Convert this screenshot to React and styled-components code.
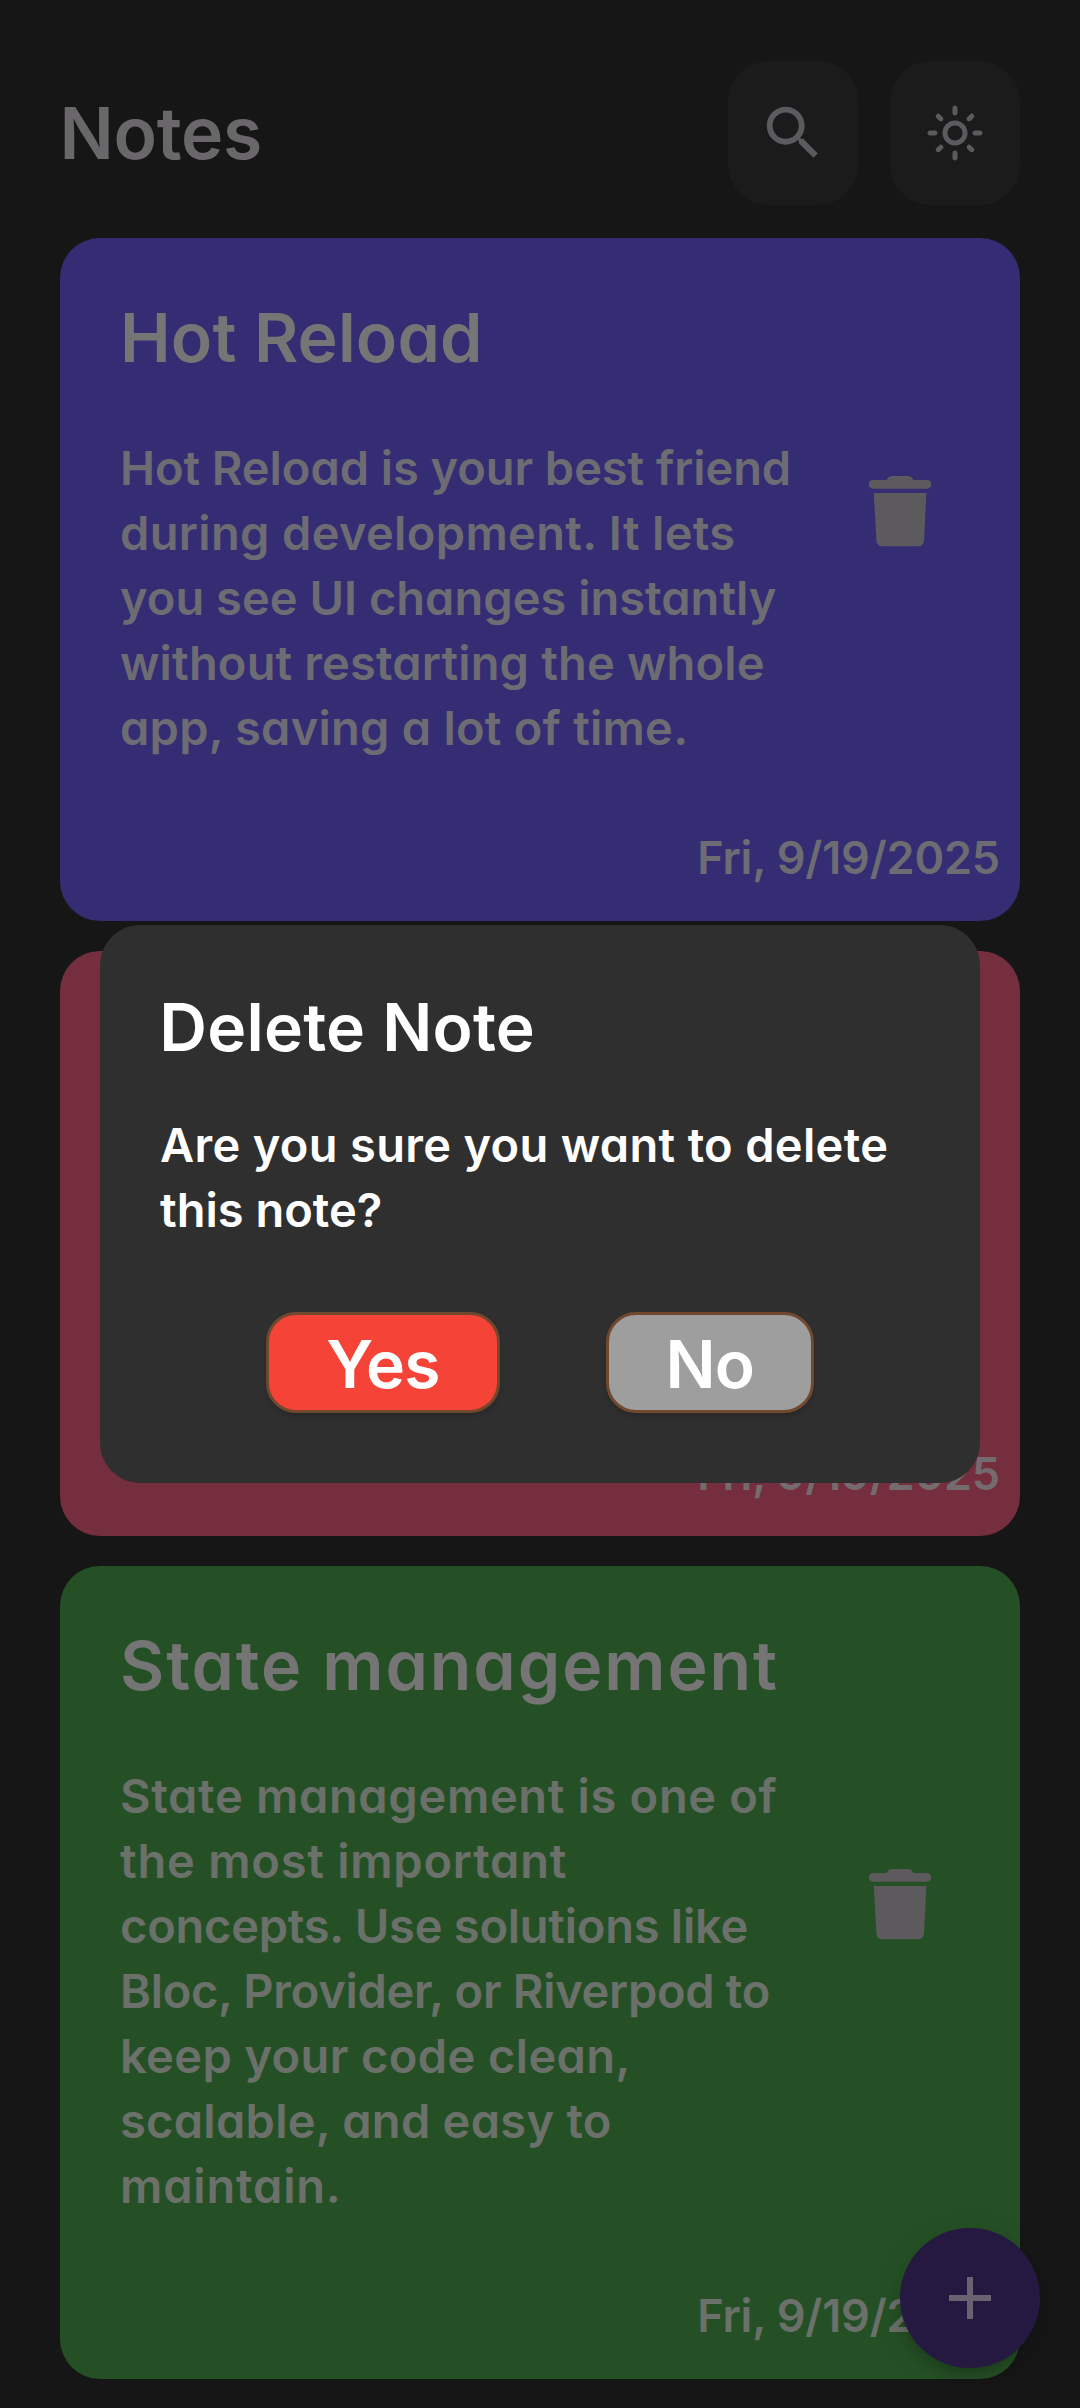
import React from "react";
import styled, { createGlobalStyle } from "styled-components";
import { MdSearch, MdOutlineLightMode, MdAdd } from "react-icons/md";

const GlobalStyle = createGlobalStyle`
  * { box-sizing: border-box; }
  body {
    margin: 0;
    background: #161616;
    font-family: Inter, "Noto Sans", sans-serif;
    font-weight: 600;
    font-feature-settings: "cv11";
  }
  button { font: inherit; font-feature-settings: inherit; border: 0; padding: 0; background: none; }
`;

const Screen = styled.div`
  position: relative;
  height: 2408px;
  padding: 61px 60px 0;
  overflow: hidden;
  background: #161616;
`;

const Header = styled.header`
  display: flex;
  align-items: center;
  height: 144px;
  margin-bottom: 33px;
`;

const ScreenTitle = styled.h1`
  flex: 1;
  margin: 0 0 0 -0.6px;
  font-size: 71.5px;
  font-weight: inherit;
  line-height: 108px;
  letter-spacing: -0.25px;
  color: #69676a;
`;

const HeaderActions = styled.div`
  display: flex;
  gap: 32px;
`;

const IconButton = styled.button`
  display: grid;
  place-items: center;
  width: 130px;
  height: 144px;
  border-radius: 40px;
  background: #1b1b1b;
  color: #5c5a5e;
`;

const NoteList = styled.main`
  display: flex;
  flex-direction: column;
  gap: 30px;
`;

const NoteCard = styled.article`
  display: flex;
  flex-direction: column;
  min-height: ${(p) => p.$minHeight || 0}px;
  padding: 24px 20px 30.5px 60px;
  border-radius: 40px;
  background: ${(p) => p.$color};
`;

const NoteMain = styled.div`
  display: flex;
  align-items: center;
  justify-content: space-between;
  padding-right: 69px;
`;

const NoteText = styled.div`
  padding-top: 26px;
`;

const NoteTitle = styled.h2`
  margin: 0 0 48px;
  font-size: 68px;
  font-weight: inherit;
  line-height: 99px;
  white-space: nowrap;
  color: #757575;
`;

const NoteBody = styled.p`
  width: 690px;
  margin: 0;
  font-size: 47px;
  line-height: 65px;
  color: ${(p) => p.$ink};
`;

const Line = styled.span`
  display: block;
  white-space: nowrap;
  letter-spacing: ${(p) => p.$track}px;
`;

const DeleteButton = styled.button`
  display: flex;
  width: 62px;
  height: 71px;
  margin-left: -62px;
  color: #5d5a5e;
`;

const NoteDate = styled.time`
  align-self: flex-end;
  margin-top: auto;
  padding-top: 65px;
  font-size: 45px;
  line-height: 65px;
  letter-spacing: -0.16px;
  color: ${(p) => p.$ink};
`;

const AddButton = styled.button`
  position: absolute;
  left: 900px;
  top: 2228px;
  display: grid;
  place-items: center;
  width: 140px;
  height: 140px;
  border-radius: 50%;
  background: #251941;
  color: #6a6272;
  box-shadow: 0 8px 12px -3px rgba(0, 0, 0, 0.2), 0 6px 30px rgba(22, 22, 22, 0.14);
`;

const Overlay = styled.div`
  position: absolute;
  inset: 0;
  display: flex;
  align-items: center;
  justify-content: center;
`;

const Dialog = styled.section`
  width: 880px;
  height: 558px;
  padding: 53px 60px 0;
  border-radius: 40px;
  background: #2f2f2f;
  color: #fff;
`;

const DialogTitle = styled.h2`
  margin: 0 0 35px -0.7px;
  font-size: 66px;
  font-weight: inherit;
  line-height: 99px;
  letter-spacing: 0.22px;
`;

const DialogBody = styled.p`
  margin: 0 0 70px;
  font-size: 47px;
  line-height: 65px;
`;

const DialogActions = styled.div`
  display: flex;
  justify-content: space-evenly;
`;

const DialogButton = styled.button`
  width: ${(p) => p.$width}px;
  height: 101px;
  padding-top: 2px;
  border: 3px solid #70482e;
  border-radius: 30px;
  background: ${(p) => p.$color};
  color: #fff;
  font-size: 66px;
  line-height: 90px;
  letter-spacing: -0.9px;
  box-shadow: 0 3px 4px rgba(0, 0, 0, 0.16);
`;

function TrashIcon() {
  return (
    <svg width="62" height="71" viewBox="0 0 62 71" fill="currentColor" aria-hidden="true">
      <path d="M4.2 4H17.6Q19.4 0 23 0H39Q42.6 0 44.4 4H57.8A4.4 4.4 0 0 1 57.8 12.8H4.2A4.4 4.4 0 0 1 4.2 4Z" />
      <path d="M4.8 17H57.4L55 64.5Q54.4 70.3 49 70.3H13.4Q8 70.3 7.4 64.5Z" />
    </svg>
  );
}

const notes = [
  {
    title: "Hot Reload",
    track: 0.16,
    color: "#342d74",
    ink: "#6d6c73",
    lines: [
      ["Hot Reload is your best friend", -0.06],
      ["during development. It lets", 0.35],
      ["you see UI changes instantly", 0.02],
      ["without restarting the whole", 0.16],
      ["app, saving a lot of time.", 0.24],
    ],
  },
  { color: "#752e3e", ink: "#736b6d", minHeight: 585.5, lines: [] },
  {
    title: "State management",
    track: 1.93,
    color: "#255025",
    ink: "#6b706b",
    lines: [
      ["State management is one of", 0.68],
      ["the most important", 0.77],
      ["concepts. Use solutions like", -0.24],
      ["Bloc, Provider, or Riverpod to", -0.3],
      ["keep your code clean,", 0.39],
      ["scalable, and easy to", 0.28],
      ["maintain.", 0.83],
    ],
  },
];

function Note({ note }) {
  return (
    <NoteCard $color={note.color} $minHeight={note.minHeight}>
      {note.title && (
        <NoteMain>
          <NoteText>
            <NoteTitle>
              <Line $track={note.track}>{note.title}</Line>
            </NoteTitle>
            <NoteBody $ink={note.ink}>
              {note.lines.map(([text, track]) => (
                <Line key={text} $track={track}>
                  {text}
                </Line>
              ))}
            </NoteBody>
          </NoteText>
          <DeleteButton aria-label="Delete note">
            <TrashIcon />
          </DeleteButton>
        </NoteMain>
      )}
      <NoteDate $ink={note.ink}>Fri, 9/19/2025</NoteDate>
    </NoteCard>
  );
}

export default function App() {
  return (
    <Screen>
      <GlobalStyle />
      <Header>
        <ScreenTitle>Notes</ScreenTitle>
        <HeaderActions>
          <IconButton aria-label="Search">
            <MdSearch size={70} />
          </IconButton>
          <IconButton aria-label="Toggle theme">
            <MdOutlineLightMode size={60} />
          </IconButton>
        </HeaderActions>
      </Header>
      <NoteList>
        {notes.map((note) => (
          <Note key={note.color} note={note} />
        ))}
      </NoteList>
      <AddButton aria-label="Add note">
        <MdAdd size={72} />
      </AddButton>
      <Overlay>
        <Dialog role="dialog">
          <DialogTitle>Delete Note</DialogTitle>
          <DialogBody>
            <Line $track={0.32}>Are you sure you want to delete</Line>
            <Line $track={0.01}>this note?</Line>
          </DialogBody>
          <DialogActions>
            <DialogButton $width={233.5} $color="#f54337">
              Yes
            </DialogButton>
            <DialogButton $width={208} $color="#9e9e9e">
              No
            </DialogButton>
          </DialogActions>
        </Dialog>
      </Overlay>
    </Screen>
  );
}
